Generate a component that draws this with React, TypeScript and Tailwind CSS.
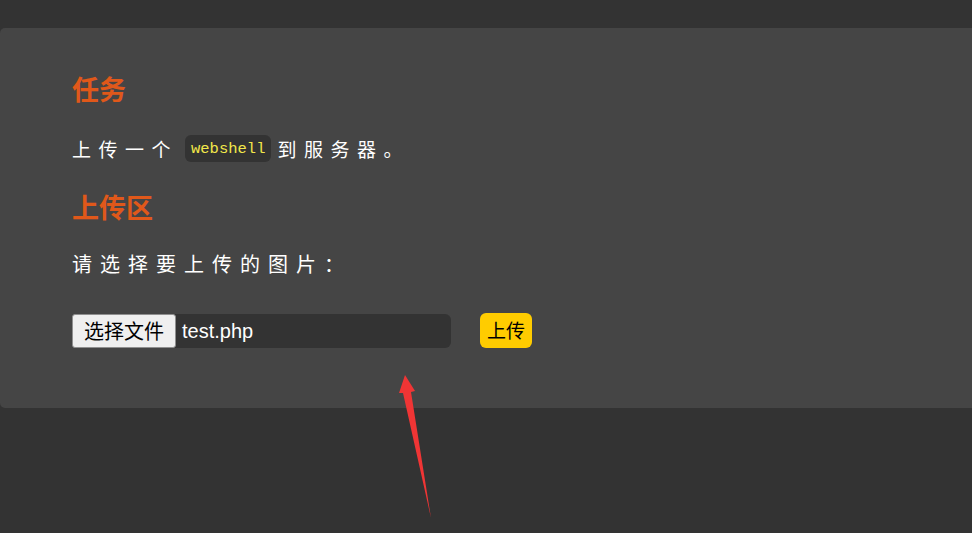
const cjk = { fontFamily: '"Noto Sans CJK SC", "Microsoft YaHei", sans-serif' }

export default function App() {
  return (
    <div className="relative min-h-screen bg-[#333333] pt-[28px]" style={cjk}>
      {/* Upload panel */}
      <section className="h-[380px] rounded-l-[5px] bg-[#454545] pl-[72px] pt-[43px] text-white">
        <h2 className="text-[27px] font-bold leading-[36px] text-[#e0581a]">任务</h2>
        <p className="mt-[28px] text-[19px] leading-[28px] tracking-[7.5px]">
          上传一个
          <code
            className="ml-[7px] mr-[6px] inline-block h-[27px] rounded-[6px] bg-[#333333] px-[6px] align-top text-[15.5px] leading-[29px] tracking-normal text-[#f2e84a]"
            style={{ fontFamily: '"Liberation Mono", monospace' }}
          >
            webshell
          </code>
          到服务器。
        </p>

        <h2 className="mt-[26px] text-[27px] font-bold leading-[36px] text-[#e0581a]">上传区</h2>
        <p className="mt-[25px] text-[20px] leading-[28px] tracking-[8px]">请选择要上传的图片：</p>

        <div className="mt-[35px] flex items-center">
          {/* File input */}
          <div className="flex h-[34px] w-[379px] items-center rounded-[6px] bg-[#333333]">
            <span className="flex h-[34px] w-[104px] items-center justify-center rounded-[3px] border border-[#8f8f8f] bg-[#efefef] text-[20px] text-black">
              选择文件
            </span>
            <span
              className="pl-[6px] text-[20px] text-white"
              style={{ fontFamily: '"Liberation Sans", Arial, sans-serif' }}
            >
              test.php
            </span>
          </div>
          <button className="ml-[29px] flex h-[35px] w-[52px] items-center justify-center rounded-[6px] bg-[#ffcc00] text-[19px] text-black">
            上传
          </button>
        </div>
      </section>

      {/* Annotation arrow */}
      <svg className="absolute left-0 top-0" width="972" height="533" viewBox="0 0 972 533">
        <polygon
          points="405,375 415,391 411,392 431,518 403,393 399,393"
          fill="#f03535"
        />
      </svg>
    </div>
  )
}
